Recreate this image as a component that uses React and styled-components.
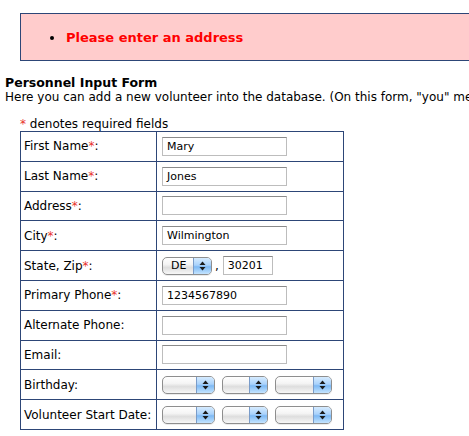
import React from "react";
import styled, { createGlobalStyle } from "styled-components";

const GlobalStyle = createGlobalStyle`
  html, body {
    margin: 0;
    padding: 0;
    background: #ffffff;
    overflow: hidden;
  }
  body {
    font-family: "DejaVu Sans", Verdana, sans-serif;
    font-size: 12px;
    color: #000;
  }
`;

const Page = styled.div`
  width: 469px;
  height: 436px;
  overflow: hidden;
  padding-left: 5px;
  box-sizing: border-box;
`;

const ErrorBox = styled.div`
  margin: 13px 0 0 15px;
  width: 600px;
  height: 48px;
  box-sizing: border-box;
  background: #ffcccc;
  border: 1px solid #2d4677;
  display: flex;
  align-items: center;
`;

const ErrorList = styled.ul`
  margin: 0;
  padding-left: 44px;
  list-style: disc;
  li {
    color: #ff0000;
    font-weight: bold;
    font-size: 13px;
    padding-left: 1px;
  }
  li::marker {
    color: #000;
  }
`;

const Heading = styled.div`
  margin-top: 14px;
  font-weight: bold;
  font-size: 12.5px;
  line-height: 15px;
`;

const Intro = styled.div`
  white-space: nowrap;
  line-height: 15px;
`;

const Note = styled.div`
  margin: 12px 0 0 15px;
  line-height: 15px;
  height: 14px;
`;

const Star = styled.span`
  color: #e8322b;
`;

const FormTable = styled.table`
  margin-left: 15px;
  border-collapse: collapse;
  border: 1px solid #2d4677;
  td {
    border: 1px solid #2d4677;
    height: ${(p) => p.$rowH}px;
    padding: 0;
    vertical-align: middle;
  }
`;

const LabelCell = styled.td`
  width: 132px;
  padding-left: 3px !important;
  white-space: nowrap;
`;

const FieldCell = styled.td`
  width: 181px;
  padding-left: 5px !important;
`;

const Row = styled.div`
  display: flex;
  align-items: center;
  gap: ${(p) => p.$gap || 7}px;
`;

const TextInput = styled.div`
  width: ${(p) => p.$w || 125}px;
  height: 19px;
  box-sizing: border-box;
  border: 1px solid #bdbdbd;
  border-top-color: #8a8a8a;
  background: #fff;
  font-size: 11px;
  line-height: 17px;
  padding-left: 4px;
  color: #000;
`;

const SelectBox = styled.div`
  width: ${(p) => p.$w}px;
  height: 18px;
  box-sizing: border-box;
  border: 1px solid #8e8e8e;
  border-radius: 5px;
  display: flex;
  overflow: hidden;
  background: linear-gradient(#ffffff 0%, #f4f4f4 40%, #dedede 60%, #f7f7f7 100%);
  box-shadow: 0 1px 0 rgba(0, 0, 0, 0.08);
`;

const SelectText = styled.div`
  flex: 1;
  font-size: 11px;
  line-height: 16px;
  padding-left: 8px;
`;

const SelectButton = styled.div`
  width: 17px;
  border-left: 1px solid #7a9cc9;
  background: linear-gradient(#d6ebff 0%, #a9d2fb 45%, #7db9f4 55%, #c4e4ff 100%);
  display: flex;
  align-items: center;
  justify-content: center;
`;

const Comma = styled.span`
  margin-left: -3px;
  margin-right: -2px;
`;

const Arrows = () => (
  <svg width="7" height="10" viewBox="0 0 7 10">
    <path d="M3.5 0.5 L6.5 4 L0.5 4 Z" fill="#1a1a1a" />
    <path d="M3.5 9.5 L6.5 6 L0.5 6 Z" fill="#1a1a1a" />
  </svg>
);

const AquaSelect = ({ w, value }) => (
  <SelectBox $w={w}>
    <SelectText>{value}</SelectText>
    <SelectButton>
      <Arrows />
    </SelectButton>
  </SelectBox>
);

const Req = ({ children }) => (
  <>
    {children}
    <Star>*</Star>:
  </>
);

const DateSelects = () => (
  <Row $gap={7}>
    <AquaSelect w={53} />
    <AquaSelect w={46} />
    <AquaSelect w={57} />
  </Row>
);

const App = () => {
  return (
    <Page>
      <GlobalStyle />
      <ErrorBox>
        <ErrorList>
          <li>Please enter an address</li>
        </ErrorList>
      </ErrorBox>
      <Heading>Personnel Input Form</Heading>
      <Intro>
        Here you can add a new volunteer into the database. (On this form, "you" means the volunteer.)
      </Intro>
      <Note>
        <Star>*</Star> denotes required fields
      </Note>
      <FormTable $rowH={28.8}>
        <tbody>
          <tr>
            <LabelCell><Req>First Name</Req></LabelCell>
            <FieldCell><TextInput>Mary</TextInput></FieldCell>
          </tr>
          <tr>
            <LabelCell><Req>Last Name</Req></LabelCell>
            <FieldCell><TextInput>Jones</TextInput></FieldCell>
          </tr>
          <tr>
            <LabelCell><Req>Address</Req></LabelCell>
            <FieldCell><TextInput /></FieldCell>
          </tr>
          <tr>
            <LabelCell><Req>City</Req></LabelCell>
            <FieldCell><TextInput>Wilmington</TextInput></FieldCell>
          </tr>
          <tr>
            <LabelCell><Req>State, Zip</Req></LabelCell>
            <FieldCell>
              <Row $gap={6}>
                <AquaSelect w={50} value="DE" />
                <Comma>,</Comma>
                <TextInput $w={50}>30201</TextInput>
              </Row>
            </FieldCell>
          </tr>
          <tr>
            <LabelCell><Req>Primary Phone</Req></LabelCell>
            <FieldCell><TextInput>1234567890</TextInput></FieldCell>
          </tr>
          <tr>
            <LabelCell>Alternate Phone:</LabelCell>
            <FieldCell><TextInput /></FieldCell>
          </tr>
          <tr>
            <LabelCell>Email:</LabelCell>
            <FieldCell><TextInput /></FieldCell>
          </tr>
          <tr>
            <LabelCell>Birthday:</LabelCell>
            <FieldCell><DateSelects /></FieldCell>
          </tr>
          <tr>
            <LabelCell>Volunteer Start Date:</LabelCell>
            <FieldCell><DateSelects /></FieldCell>
          </tr>
        </tbody>
      </FormTable>
    </Page>
  );
};

export default App;
